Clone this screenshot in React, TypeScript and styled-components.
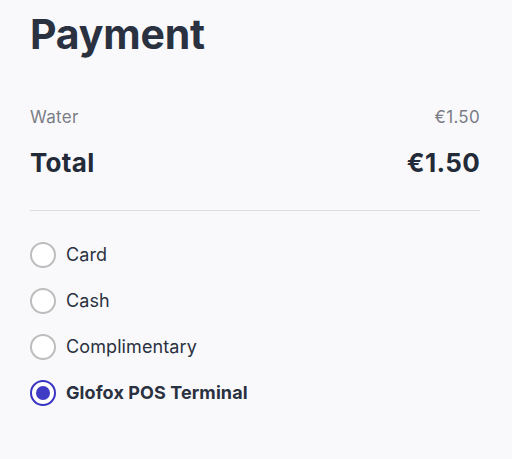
import React, { useState } from 'react';
import styled, { createGlobalStyle } from 'styled-components';

const GlobalStyle = createGlobalStyle`
  html, body {
    margin: 0;
    padding: 0;
    background: #F9F9FB;
  }
  body {
    font-family: Inter, Lato, sans-serif;
  }
`;

const Page = styled.div`
  width: 512px;
  height: 459px;
  box-sizing: border-box;
  padding: 8px 32px 0 30px;
  background: #F9F9FB;
`;

const Title = styled.h1`
  margin: 0;
  font-size: 41px;
  line-height: 52px;
  font-weight: 700;
  color: #2A3140;
  letter-spacing: -0.2px;
`;

const Summary = styled.div`
  margin-top: 47px;
  padding-bottom: 31px;
  border-bottom: solid 1px #DCDCE2;
`;

const Line = styled.div<{ $total?: boolean }>`
  display: flex;
  justify-content: space-between;
  align-items: center;
  color: ${p => (p.$total ? '#232A38' : '#7A7D85')};
  font-size: ${p => (p.$total ? '26px' : '17px')};
  font-weight: ${p => (p.$total ? 700 : 400)};
  line-height: ${p => (p.$total ? '32px' : '20px')};
  letter-spacing: 0.3px;
  margin-top: ${p => (p.$total ? '20px' : '0')};
`;

const Options = styled.div`
  display: flex;
  flex-direction: column;
  gap: 20px;
  margin-top: 31px;
`;

const Option = styled.label<{ $active: boolean }>`
  display: flex;
  align-items: center;
  gap: 10px;
  cursor: pointer;
  font-size: 18px;
  line-height: 26px;
  letter-spacing: 0.1px;
  color: #2A3140;
  font-weight: ${p => (p.$active ? 700 : 400)};
`;

const Radio = styled.span<{ $active: boolean }>`
  box-sizing: border-box;
  width: 26px;
  height: 26px;
  border-radius: 50%;
  background: #FFFFFF;
  border: solid 2px ${p => (p.$active ? '#3A34C2' : '#BDBDBD')};
  display: flex;
  align-items: center;
  justify-content: center;
  &::after {
    content: '';
    display: ${p => (p.$active ? 'block' : 'none')};
    width: 14px;
    height: 14px;
    border-radius: 50%;
    background: #3F3BC4;
  }
`;

const methods = ['Card', 'Cash', 'Complimentary', 'Glofox POS Terminal'];

export default function App() {
  const [selected, setSelected] = useState('Glofox POS Terminal');

  return (
    <Page>
      <GlobalStyle />
      <Title>Payment</Title>
      <Summary>
        <Line>
          <span>Water</span>
          <span>€1.50</span>
        </Line>
        <Line $total>
          <span>Total</span>
          <span>€1.50</span>
        </Line>
      </Summary>
      <Options>
        {methods.map(m => (
          <Option key={m} $active={selected === m} onClick={() => setSelected(m)}>
            <Radio $active={selected === m} />
            {m}
          </Option>
        ))}
      </Options>
    </Page>
  );
}
